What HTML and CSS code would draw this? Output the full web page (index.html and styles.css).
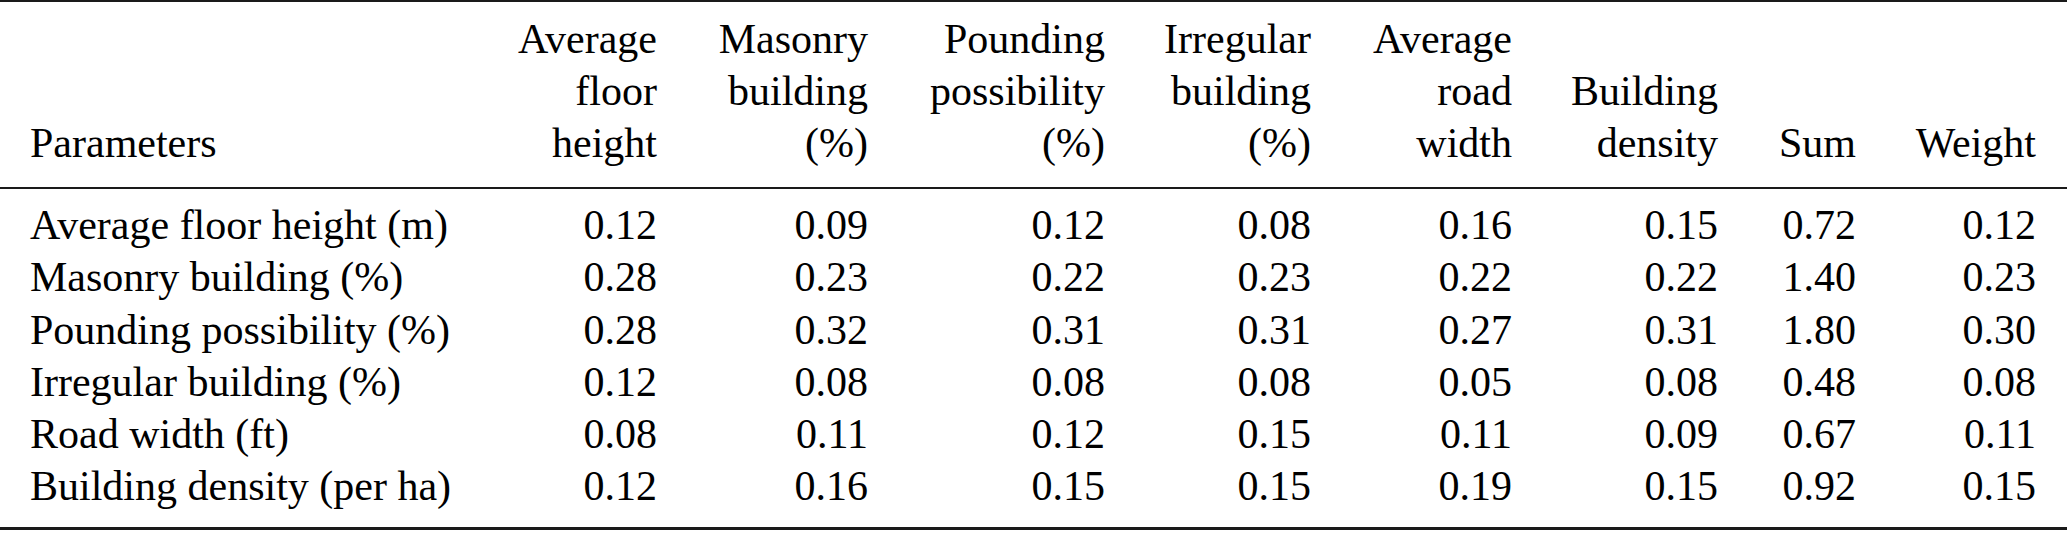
FILE: index.html
```html
<!DOCTYPE html>
<html lang="en">
<head>
<meta charset="utf-8">
<title>Parameters weights</title>
<link rel="stylesheet" href="styles.css">
</head>
<body>
<table class="data">
  <colgroup>
    <col class="c-label">
    <col class="c1">
    <col class="c2">
    <col class="c3">
    <col class="c4">
    <col class="c5">
    <col class="c6">
    <col class="c7">
    <col class="c8">
  </colgroup>
  <thead>
    <tr>
      <th class="label">Parameters</th>
      <th>Average<br>floor<br>height</th>
      <th>Masonry<br>building<br>(%)</th>
      <th>Pounding<br>possibility<br>(%)</th>
      <th>Irregular<br>building<br>(%)</th>
      <th>Average<br>road<br>width</th>
      <th>Building<br>density</th>
      <th>Sum</th>
      <th class="last">Weight</th>
    </tr>
  </thead>
  <tbody>
    <tr class="first">
      <td class="label">Average floor height (m)</td>
      <td>0.12</td><td>0.09</td><td>0.12</td><td>0.08</td><td>0.16</td><td>0.15</td><td>0.72</td><td class="last">0.12</td>
    </tr>
    <tr>
      <td class="label">Masonry building (%)</td>
      <td>0.28</td><td>0.23</td><td>0.22</td><td>0.23</td><td>0.22</td><td>0.22</td><td>1.40</td><td class="last">0.23</td>
    </tr>
    <tr>
      <td class="label">Pounding possibility (%)</td>
      <td>0.28</td><td>0.32</td><td>0.31</td><td>0.31</td><td>0.27</td><td>0.31</td><td>1.80</td><td class="last">0.30</td>
    </tr>
    <tr>
      <td class="label">Irregular building (%)</td>
      <td>0.12</td><td>0.08</td><td>0.08</td><td>0.08</td><td>0.05</td><td>0.08</td><td>0.48</td><td class="last">0.08</td>
    </tr>
    <tr>
      <td class="label">Road width (ft)</td>
      <td>0.08</td><td>0.11</td><td>0.12</td><td>0.15</td><td>0.11</td><td>0.09</td><td>0.67</td><td class="last">0.11</td>
    </tr>
    <tr class="end">
      <td class="label">Building density (per ha)</td>
      <td>0.12</td><td>0.16</td><td>0.15</td><td>0.15</td><td>0.19</td><td>0.15</td><td>0.92</td><td class="last">0.15</td>
    </tr>
  </tbody>
</table>
</body>
</html>
```
FILE: styles.css
```css
html, body {
  margin: 0;
  padding: 0;
  background: #ffffff;
}

body {
  font-family: "Liberation Serif", "Times New Roman", serif;
  font-size: 42px;
  color: #000000;
}

.data {
  width: 2067px;
  table-layout: fixed;
  border-collapse: separate;
  border-spacing: 0;
  border-top: 2px solid #1a1a1a;
}

.c-label { width: 500px; }
.c1 { width: 157px; }
.c2 { width: 211px; }
.c3 { width: 237px; }
.c4 { width: 206px; }
.c5 { width: 201px; }
.c6 { width: 206px; }
.c7 { width: 138px; }
.c8 { width: 211px; }

.data th,
.data td {
  padding: 0;
  text-align: right;
  white-space: nowrap;
  font-weight: 400;
}

.data th {
  line-height: 52px;
  vertical-align: bottom;
  padding-top: 11px;
  padding-bottom: 18px;
  border-bottom: 2px solid #1a1a1a;
}

.data td {
  line-height: 52.25px;
  vertical-align: baseline;
}

.data .label {
  text-align: left;
  padding-left: 30px;
}

.data .last {
  padding-right: 31px;
}

.data tr.first td {
  padding-top: 10px;
}

.data tr.end td {
  padding-bottom: 14px;
  border-bottom: 3px solid #1a1a1a;
}
```
